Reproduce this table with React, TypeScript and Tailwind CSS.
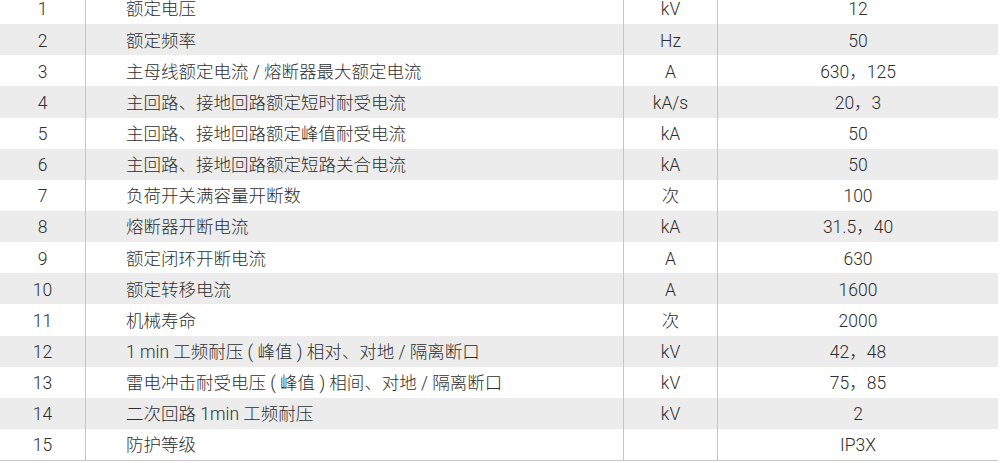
import React from "react";

const rows: [string, string, string, string][] = [
  ["1", "额定电压", "kV", "12"],
  ["2", "额定频率", "Hz", "50"],
  ["3", "主母线额定电流 / 熔断器最大额定电流", "A", "630，125"],
  ["4", "主回路、接地回路额定短时耐受电流", "kA/s", "20，3"],
  ["5", "主回路、接地回路额定峰值耐受电流", "kA", "50"],
  ["6", "主回路、接地回路额定短路关合电流", "kA", "50"],
  ["7", "负荷开关满容量开断数", "次", "100"],
  ["8", "熔断器开断电流", "kA", "31.5，40"],
  ["9", "额定闭环开断电流", "A", "630"],
  ["10", "额定转移电流", "A", "1600"],
  ["11", "机械寿命", "次", "2000"],
  ["12", "1 min 工频耐压 ( 峰值 ) 相对、对地 / 隔离断口", "kV", "42，48"],
  ["13", "雷电冲击耐受电压 ( 峰值 ) 相间、对地 / 隔离断口", "kV", "75，85"],
  ["14", "二次回路 1min 工频耐压", "kV", "2"],
  ["15", "防护等级", "", "IP3X"],
];

const App = () => {
  return (
    <div
      className="w-[1001px] h-[463px] overflow-hidden bg-white text-[17.5px] font-light text-[#2e2e2e]"
      style={{ fontFamily: 'Roboto, "Noto Sans CJK SC", sans-serif' }}
    >
      <div className="-mt-[7px] w-[998px] border-b border-[#c9c9c9]">
        {rows.map(([no, name, unit, value], i) => (
          <div
            key={no}
            className={`grid grid-cols-[86px_538px_94px_1fr] h-[31.15px] items-stretch ${
              i % 2 === 1 ? "bg-[#ececec]" : "bg-white"
            }`}
          >
            <div className="flex items-center justify-center pt-[2px] border-r border-[#c4c4c4]">{no}</div>
            <div className="flex items-center pl-[40px] pt-[2px] border-r border-[#c4c4c4] whitespace-pre">{name}</div>
            <div className="flex items-center justify-center pt-[2px] border-r border-[#c4c4c4]">{unit}</div>
            <div className="flex items-center justify-center pt-[2px] whitespace-pre">{value}</div>
          </div>
        ))}
      </div>
    </div>
  );
};

export default App;
